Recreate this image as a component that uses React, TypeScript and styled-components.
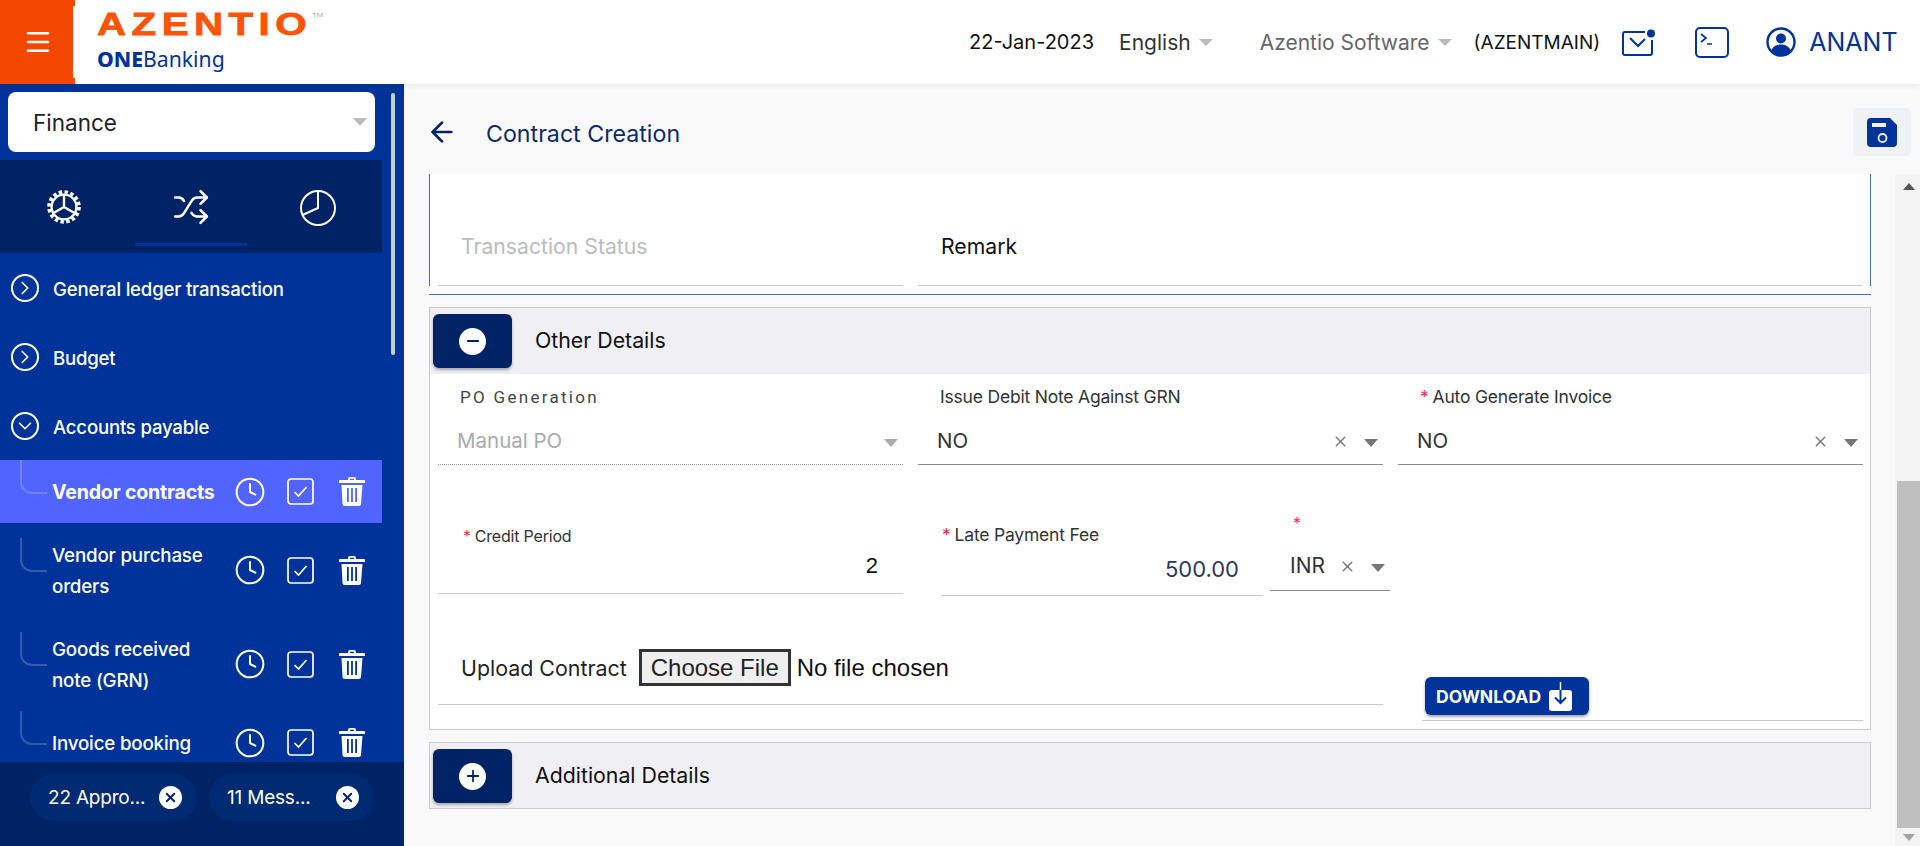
import React from "react";
import styled, { createGlobalStyle } from "styled-components";
import {
  ArrowLeft,
  ChevronDown,
  ChevronRight,
  Clock,
  Menu as MenuIcon,
  Minus,
  Plus,
  Shuffle,
  X,
} from "lucide-react";

const NAVY = "#002366";
const BLUE = "#003399";

const GlobalStyle = createGlobalStyle`
  html, body { margin: 0; padding: 0; height: 846px; overflow: hidden; }
  body { font-family: Inter, "Liberation Sans", sans-serif; background: #f9f9f9; color: #222; }
  * { box-sizing: border-box; }
`;

const GearIcon = () => (
  <svg width="36" height="36" viewBox="0 0 36 36" fill="none" stroke="#fff">
    <circle cx="18" cy="18" r="15" strokeWidth="3.6" strokeDasharray="3.4 2.5" />
    <circle cx="18" cy="18" r="12.4" strokeWidth="2.4" />
    <path d="M18 18V6M18 18L7.5 24M18 18l10.5 6" strokeWidth="2.4" />
  </svg>
);

const PieIcon = () => (
  <svg width="38" height="38" viewBox="0 0 38 38" fill="none" stroke="#fff" strokeWidth="2">
    <circle cx="19" cy="20" r="17" />
    <path d="M19 2v18L3.5 27" />
  </svg>
);

const TrashIcon = () => (
  <svg width="26" height="29" viewBox="0 0 26 29" fill="#fff">
    <path d="M9 3V2a2 2 0 0 1 2-2h4a2 2 0 0 1 2 2v1h8a1 1 0 0 1 1 1v2H0V4a1 1 0 0 1 1-1zm2-1.2V3h4V1.800z" />
    <path
      fillRule="evenodd"
      d="M2.500 8h21l-1.500 18.500a2.500 2.500 0 0 1-2.500 2.500h-13.500a2.500 2.500 0 0 1-2.500-2.500zM8 11v14h1.800V11zm4.100 0v14h1.800V11zm4.100 0v14H18V11z"
    />
  </svg>
);

const CheckBoxIcon = () => (
  <svg width="27" height="27" viewBox="0 0 27 27" fill="none" stroke="#fff" strokeWidth="1.700">
    <rect x="1" y="1" width="25" height="25" rx="3" />
    <path d="M7.500 14l4 4 8-9" />
  </svg>
);

const MailIcon = () => (
  <svg width="34" height="27" viewBox="0 0 34 27" fill="none" stroke={BLUE} strokeWidth="2">
    <path d="M23 3H3a2 2 0 0 0-2 2v19a2 2 0 0 0 2 2h25a2 2 0 0 0 2-2V11" />
    <path d="M8 9l8 8 7-7" />
    <circle cx="29" cy="4.500" r="4" fill={BLUE} stroke="none" />
  </svg>
);

const TerminalIcon = () => (
  <svg width="34" height="31" viewBox="0 0 34 31" fill="none" stroke={BLUE} strokeWidth="2">
    <rect x="1" y="1" width="32" height="29" rx="4" />
    <path d="M6 7l5 4-5 4M12 17h5" strokeWidth="1.700" />
  </svg>
);

const UserIcon = () => (
  <svg width="32" height="30" viewBox="0 0 32 30">
    <circle cx="16" cy="15" r="13.500" fill="none" stroke={BLUE} strokeWidth="2.400" />
    <circle cx="16" cy="11.500" r="5" fill={BLUE} />
    <path d="M6 24c2-5 6-6.500 10-6.500S24 19 26 24c-2.500 3-6 4.500-10 4.500S8.500 27 6 24z" fill={BLUE} />
  </svg>
);

const SaveIcon = () => (
  <svg width="31" height="31" viewBox="0 0 31 31">
    <path d="M4 1h19l7 7v18a4 4 0 0 1-4 4H4a4 4 0 0 1-4-4V5a4 4 0 0 1 4-4z" fill={BLUE} />
    <rect x="5" y="6" width="14" height="4" fill="#f0f1f5" />
    <circle cx="15.500" cy="21" r="4" fill="none" stroke="#f0f1f5" strokeWidth="1.800" />
  </svg>
);

const DownloadIcon = () => (
  <svg width="23" height="29" viewBox="0 0 23 29">
    <rect x="0" y="8" width="23" height="21" rx="3" fill="#fff" />
    <path d="M11.500 0v19" stroke="#fff" strokeWidth="1.500" />
    <path d="M11.500 8v13M6 15.500l5.500 5.500 5.500-5.500" stroke={BLUE} strokeWidth="2" fill="none" />
  </svg>
);

const Page = styled.div`
  width: 1920px;
  height: 846px;
  display: flex;
  flex-direction: column;
  overflow: hidden;
`;

const Header = styled.header`
  height: 84px;
  flex: none;
  display: flex;
  align-items: center;
  background: #fff;
  box-shadow: 0 2px 5px rgba(0, 0, 0, 0.07);
  position: relative;
  z-index: 2;
`;

const Burger = styled.div`
  width: 75px;
  height: 84px;
  flex: none;
  display: flex;
  align-items: center;
  justify-content: center;
  background: #f44700;
  color: #fff;
  position: relative;
  &::after {
    content: "";
    position: absolute;
    right: 0;
    top: 6px;
    bottom: 6px;
    width: 2px;
    background: #fff;
  }
`;

const Logo = styled.div`
  margin-left: 22px;
  width: 220px;
  height: 84px;
  padding-top: 8px;
`;

const LogoMark = styled.div`
  font-family: "Liberation Sans", sans-serif;
  font-weight: 700;
  font-size: 31px;
  line-height: 33px;
  color: #fa5507;
  letter-spacing: 4.200px;
  transform: scaleX(1.3);
  transform-origin: left center;
  white-space: nowrap;
  -webkit-text-stroke: 0.8px #fa5507;
  sup {
    font-size: 6px;
    font-weight: 400;
    letter-spacing: 0;
    color: #aaa;
    -webkit-text-stroke: 0;
    vertical-align: 18px;
    line-height: 0;
  }
`;

const LogoSub = styled.div`
  margin-top: 5px;
  font-family: "Noto Sans", sans-serif;
  font-size: 21.200px;
  line-height: 26px;
  color: ${BLUE};
  b { font-weight: 800; }
`;

const HeaderRight = styled.div`
  flex: 1;
  display: flex;
  align-items: center;
  padding-left: 652px;
  font-size: 20px;
`;

const HeaderText = styled.span<{ $ml: number; $color?: string; $size?: number }>`
  margin-left: ${(p) => p.$ml}px;
  color: ${(p) => p.$color ?? "#111"};
  font-size: ${(p) => p.$size ?? 20}px;
  white-space: nowrap;
`;

const SmallCaret = styled.i`
  display: inline-block;
  margin-left: 8px;
  border: 7px solid transparent;
  border-top: 7px solid #bbb;
  border-bottom: 0;
  vertical-align: 4px;
`;

const HeaderIcon = styled.span<{ $ml: number }>`
  margin-left: ${(p) => p.$ml}px;
  display: flex;
`;

const Body = styled.div`
  flex: 1;
  display: flex;
  min-height: 0;
`;

const Sidebar = styled.aside`
  width: 404px;
  flex: none;
  background: ${BLUE};
  display: flex;
  flex-direction: column;
  position: relative;
  overflow: hidden;
`;

const SideScrollThumb = styled.div`
  position: absolute;
  left: 391px;
  top: 9px;
  width: 4px;
  height: 262px;
  border-radius: 2px;
  background: #c8ccd4;
`;

const SideScroll = styled.div`
  flex: 1;
  min-height: 0;
  overflow: hidden;
  width: 382px;
`;

const ModuleSelect = styled.div`
  margin: 8px 0 8px 8px;
  width: 367px;
  height: 60px;
  border-radius: 8px;
  background: #fff;
  display: flex;
  align-items: center;
  justify-content: space-between;
  padding: 0 8px 0 25px;
  font-size: 22.500px;
  color: #222;
`;

const SelectCaret = styled.i`
  border: 7px solid transparent;
  border-top: 8px solid #bbb;
  border-bottom: 0;
`;

const TabRow = styled.div`
  height: 93px;
  background: ${NAVY};
  display: grid;
  grid-template-columns: repeat(3, 127px);
`;

const TabCell = styled.div<{ $active?: boolean }>`
  display: flex;
  justify-content: center;
  align-items: center;
  color: #fff;
  height: 93px;
  position: relative;
  ${(p) =>
    p.$active &&
    `&::after {
      content: "";
      position: absolute;
      left: 8px;
      right: 7px;
      bottom: 7px;
      height: 3px;
      background: ${BLUE};
    }`}
`;

const GroupRow = styled.div`
  height: 69px;
  display: flex;
  align-items: center;
  padding-left: 11px;
  color: #fff;
  font-size: 18.600px;
  font-weight: 500;
  letter-spacing: -0.2px;
  span:last-child { padding-top: 2px; }
`;

const RoundIcon = styled.span`
  width: 28px;
  height: 28px;
  border: 2px solid #fff;
  border-radius: 50%;
  display: flex;
  align-items: center;
  justify-content: center;
  margin-right: 14px;
  flex: none;
`;

const LeafRow = styled.div<{ $active?: boolean; $height: number }>`
  height: ${(p) => p.$height}px;
  position: relative;
  display: flex;
  align-items: center;
  padding-left: 52px;
  color: #fff;
  font-size: ${(p) => (p.$active ? 19.6 : 18.8)}px;
  font-weight: ${(p) => (p.$active ? 700 : 500)};
  line-height: 31px;
  letter-spacing: -0.2px;
  background: ${(p) => (p.$active ? "#5164ff" : "transparent")};
  &::before {
    content: "";
    position: absolute;
    left: 20px;
    top: calc(50% - 32px);
    width: 25px;
    height: 32px;
    border-left: 2px solid rgba(255, 255, 255, 0.2);
    border-bottom: 2px solid rgba(255, 255, 255, 0.2);
    border-bottom-left-radius: 12px;
  }
`;

const LeafText = styled.span`
  width: 166px;
  flex: none;
  padding-top: 2px;
  white-space: pre-line;
`;

const LeafIcons = styled.div`
  display: grid;
  grid-template-columns: repeat(3, 51px);
  justify-items: center;
  align-items: center;
  margin-left: 6px;
`;

const SideFooter = styled.div`
  height: 84px;
  flex: none;
  background: ${NAVY};
  position: relative;
  display: flex;
  gap: 12px;
  padding: 12px 0 0 30px;
`;

const Chip = styled.div<{ $width: number }>`
  width: ${(p) => p.$width}px;
  height: 47px;
  border-radius: 24px;
  background: #002a72;
  display: flex;
  align-items: center;
  justify-content: space-between;
  padding: 0 15px 0 18px;
  color: #fff;
  font-size: 19px;
  letter-spacing: -0.2px;
`;

const ChipClose = styled.span`
  width: 23px;
  height: 23px;
  border-radius: 50%;
  background: #fff;
  color: ${NAVY};
  display: flex;
  align-items: center;
  justify-content: center;
`;

const Main = styled.main`
  flex: 1;
  min-width: 0;
  display: flex;
  flex-direction: column;
`;

const TitleBar = styled.div`
  height: 90px;
  flex: none;
  display: flex;
  align-items: center;
  padding: 6px 9px 0 22px;
  color: ${NAVY};
`;

const Title = styled.h1`
  margin: 4px 0 0 28px;
  flex: 1;
  font-size: 23.200px;
  font-weight: 400;
  color: #0a2a66;
`;

const SaveButton = styled.div`
  width: 58px;
  height: 48px;
  background: #f0f1f5;
  border-radius: 4px;
  display: flex;
  align-items: center;
  justify-content: center;
`;

const ScrollArea = styled.div`
  flex: 1;
  min-height: 0;
  display: flex;
`;

const Content = styled.div`
  width: 1491px;
  padding: 0 24px 0 25px;
`;

const TopCard = styled.div`
  height: 121px;
  background: #fff;
  position: relative;
  border-bottom: 1px solid #3e6db5;
  &::before {
    content: "";
    position: absolute;
    inset: 0 0 8px 0;
    border-left: 1px solid #3e6db5;
    border-right: 1px solid #3e6db5;
  }
`;

const TopGrid = styled.div`
  display: grid;
  grid-template-columns: 465px 944px;
  gap: 15px;
  padding-left: 9px;
`;

const PlainField = styled.div<{ $muted?: boolean }>`
  height: 112px;
  padding: 58px 0 0 23px;
  font-size: 21.200px;
  line-height: 28px;
  color: ${(p) => (p.$muted ? "#bbb" : "#111")};
  border-bottom: 1px solid #c9c9c9;
`;

const Panel = styled.section<{ $height: number }>`
  margin-top: 12px;
  height: ${(p) => p.$height}px;
  background: #fff;
  border: 1px solid #c9c9cf;
  overflow: hidden;
`;

const PanelHead = styled.div`
  height: 66px;
  background: #efeff4;
  display: flex;
  align-items: center;
  padding: 0 0 2px 3px;
  font-size: 21.300px;
  color: #111;
`;

const Toggle = styled.div`
  width: 79px;
  height: 54px;
  background: ${NAVY};
  border-radius: 6px;
  margin: 2px 23px 0 0;
  box-shadow: 0 2px 3px rgba(0, 0, 0, 0.3);
  display: flex;
  align-items: center;
  justify-content: center;
`;

const ToggleDot = styled.span`
  width: 27px;
  height: 27px;
  background: #fff;
  border-radius: 50%;
  color: ${NAVY};
  display: flex;
  align-items: center;
  justify-content: center;
`;

const FormRow = styled.div<{ $mt: number }>`
  display: grid;
  grid-template-columns: repeat(3, 465px);
  column-gap: 15px;
  align-items: start;
  margin-top: ${(p) => p.$mt}px;
  padding-left: 8px;
`;

const Field = styled.div<{ $height: number; $line?: string; $ml?: number; $width?: number; $span?: number }>`
  height: ${(p) => p.$height}px;
  margin-left: ${(p) => p.$ml ?? 0}px;
  width: ${(p) => (p.$width ? `${p.$width}px` : "auto")};
  grid-column: span ${(p) => p.$span ?? 1};
  flex: none;
  border-bottom: 1px ${(p) => p.$line ?? "solid #c9c9c9"};
  display: flex;
  flex-direction: column;
`;

const Label = styled.label<{ $top: number; $left: number; $size?: number }>`
  margin-top: ${(p) => p.$top}px;
  margin-left: ${(p) => p.$left}px;
  font-size: ${(p) => p.$size ?? 17.5}px;
  line-height: 20px;
  letter-spacing: -0.2px;
  color: #333;
  white-space: nowrap;
`;

const SpacedLabel = styled(Label)`
  font-family: Roboto, sans-serif;
  font-size: 17px;
  letter-spacing: 2.3px;
  color: #444;
`;

const Star = styled.span`
  color: #f0304f;
  margin-right: 4px;
`;

const SelectValue = styled.div<{ $top: number; $left: number; $color?: string; $size?: number }>`
  margin-top: ${(p) => p.$top}px;
  padding-left: ${(p) => p.$left}px;
  padding-right: 5px;
  display: flex;
  align-items: center;
  justify-content: space-between;
  font-size: ${(p) => p.$size ?? 20.5}px;
  line-height: 26px;
  color: ${(p) => p.$color ?? "#333"};
`;

const SelectTools = styled.span`
  display: flex;
  align-items: center;
  gap: 15px;
  color: #777;
`;

const Caret = styled.i<{ $light?: boolean }>`
  border: 7px solid transparent;
  border-top: 8px solid ${(p) => (p.$light ? "#aaa" : "#757575")};
  border-bottom: 0;
  margin-top: 3px;
`;

const NumberValue = styled.div<{ $top: number; $right: number; $color?: string; $arial?: boolean }>`
  margin-top: ${(p) => p.$top}px;
  padding-right: ${(p) => p.$right}px;
  text-align: right;
  font-size: 22px;
  line-height: 28px;
  color: ${(p) => p.$color ?? "#111"};
  font-family: ${(p) => (p.$arial ? '"Liberation Sans", sans-serif' : "Inter, sans-serif")};
`;

const FeeGroup = styled.div`
  display: flex;
  gap: 7px;
  align-items: flex-start;
`;

const UploadLine = styled.div`
  margin-top: 39px;
  padding-left: 23px;
  display: flex;
  align-items: center;
  font-size: 21.400px;
  height: 37px;
  white-space: nowrap;
`;

const ChooseButton = styled.span`
  margin-left: 12px;
  width: 152px;
  height: 37px;
  border: 3px solid #333;
  background: #efefef;
  display: flex;
  align-items: center;
  justify-content: center;
  font-family: "Liberation Sans", sans-serif;
  font-size: 24px;
  color: #222;
`;

const FileName = styled.span`
  margin-left: 6px;
  font-family: "Liberation Sans", sans-serif;
  font-size: 24px;
  color: #111;
`;

const DownloadButton = styled.div`
  margin: 67px 0 0 3px;
  width: 164px;
  height: 38px;
  background: ${BLUE};
  border-radius: 6px;
  box-shadow: 0 2px 3px rgba(0, 0, 0, 0.35);
  display: flex;
  align-items: center;
  gap: 8px;
  padding-left: 11px;
  color: #fff;
  font-size: 17.500px;
  font-weight: 700;
`;

const Scrollbar = styled.div`
  width: 25px;
  flex: none;
  background: #f3f3f3;
  display: flex;
  flex-direction: column;
  align-items: center;
  padding-left: 2px;
`;

const ScrollArrow = styled.i<{ $down?: boolean }>`
  margin: ${(p) => (p.$down ? "6px 0 5px" : "9px 0")};
  border: 6px solid transparent;
  ${(p) => (p.$down ? "border-top: 7px solid #a3a3a3; border-bottom: 0;" : "border-bottom: 7px solid #555; border-top: 0;")}
`;

const ScrollThumb = styled.div`
  width: 100%;
  height: 347px;
  margin-top: auto;
  background: #bfbfbf;
`;

const leafRows = [
  { text: "Vendor contracts", height: 63, active: true },
  { text: "Vendor purchase\norders", height: 94 },
  { text: "Goods received\nnote (GRN)", height: 94 },
  { text: "Invoice booking", height: 63 },
];

export default function App() {
  return (
    <Page>
      <GlobalStyle />
      <Header>
        <Burger>
          <MenuIcon size={30} strokeWidth={2} />
        </Burger>
        <Logo>
          <LogoMark>
            AZENTIO<sup>TM</sup>
          </LogoMark>
          <LogoSub>
            <b>ONE</b>Banking
          </LogoSub>
        </Logo>
        <HeaderRight>
          <HeaderText $ml={0}>22-Jan-2023</HeaderText>
          <HeaderText $ml={25} $color="#333" $size={21}>
            English
            <SmallCaret />
          </HeaderText>
          <HeaderText $ml={47} $color="#666" $size={21}>
            Azentio Software
            <SmallCaret />
          </HeaderText>
          <HeaderText $ml={22} $size={19}>
            (AZENTMAIN)
          </HeaderText>
          <HeaderIcon $ml={22}>
            <MailIcon />
          </HeaderIcon>
          <HeaderIcon $ml={39}>
            <TerminalIcon />
          </HeaderIcon>
          <HeaderIcon $ml={36}>
            <UserIcon />
          </HeaderIcon>
          <HeaderText $ml={12} $color={BLUE} $size={25}>
            ANANT
          </HeaderText>
        </HeaderRight>
      </Header>

      <Body>
        <Sidebar>
          <SideScrollThumb />
          <SideScroll>
            <ModuleSelect>
              Finance
              <SelectCaret />
            </ModuleSelect>
            <TabRow>
              <TabCell>
                <GearIcon />
              </TabCell>
              <TabCell $active>
                <Shuffle size={38} strokeWidth={1.6} />
              </TabCell>
              <TabCell>
                <PieIcon />
              </TabCell>
            </TabRow>
            <GroupRow>
              <RoundIcon>
                <ChevronRight size={22} strokeWidth={1.8} />
              </RoundIcon>
              <span>General ledger transaction</span>
            </GroupRow>
            <GroupRow>
              <RoundIcon>
                <ChevronRight size={22} strokeWidth={1.8} />
              </RoundIcon>
              <span>Budget</span>
            </GroupRow>
            <GroupRow>
              <RoundIcon>
                <ChevronDown size={22} strokeWidth={1.8} />
              </RoundIcon>
              <span>Accounts payable</span>
            </GroupRow>
            {leafRows.map((row) => (
              <LeafRow key={row.text} $active={row.active} $height={row.height}>
                <LeafText>{row.text}</LeafText>
                <LeafIcons>
                  <Clock size={32} strokeWidth={1.5} />
                  <CheckBoxIcon />
                  <TrashIcon />
                </LeafIcons>
              </LeafRow>
            ))}
          </SideScroll>
          <SideFooter>
            <Chip $width={167}>
              22 Appro...
              <ChipClose>
                <X size={15} strokeWidth={3} />
              </ChipClose>
            </Chip>
            <Chip $width={165}>
              11 Mess...
              <ChipClose>
                <X size={15} strokeWidth={3} />
              </ChipClose>
            </Chip>
          </SideFooter>
        </Sidebar>

        <Main>
          <TitleBar>
            <ArrowLeft size={32} strokeWidth={2} />
            <Title>Contract Creation</Title>
            <SaveButton>
              <SaveIcon />
            </SaveButton>
          </TitleBar>
          <ScrollArea>
            <Content>
              <TopCard>
                <TopGrid>
                  <PlainField $muted>Transaction Status</PlainField>
                  <PlainField>Remark</PlainField>
                </TopGrid>
              </TopCard>
              <Panel $height={423}>
                <PanelHead>
                  <Toggle>
                    <ToggleDot>
                      <Minus size={18} strokeWidth={2.4} />
                    </ToggleDot>
                  </Toggle>
                  Other Details
                </PanelHead>
                <FormRow $mt={0}>
                  <Field $height={91} $line="dotted #999">
                    <SpacedLabel $top={13} $left={22}>
                      PO Generation
                    </SpacedLabel>
                    <SelectValue $top={21} $left={19} $color="#aaa">
                      Manual PO
                      <Caret $light />
                    </SelectValue>
                  </Field>
                  <Field $height={91} $line="solid #8a8a8a">
                    <Label $top={13} $left={22}>
                      Issue Debit Note Against GRN
                    </Label>
                    <SelectValue $top={21} $left={19}>
                      NO
                      <SelectTools>
                        <X size={17} />
                        <Caret />
                      </SelectTools>
                    </SelectValue>
                  </Field>
                  <Field $height={91} $line="solid #8a8a8a">
                    <Label $top={13} $left={22}>
                      <Star>*</Star>Auto Generate Invoice
                    </Label>
                    <SelectValue $top={21} $left={19}>
                      NO
                      <SelectTools>
                        <X size={17} />
                        <Caret />
                      </SelectTools>
                    </SelectValue>
                  </Field>
                </FormRow>
                <FormRow $mt={40}>
                  <Field $height={89}>
                    <Label $top={21} $left={25} $size={16}>
                      <Star>*</Star>Credit Period
                    </Label>
                    <NumberValue $top={6} $right={25} $arial>
                      2
                    </NumberValue>
                  </Field>
                  <FeeGroup>
                    <Field $height={91} $ml={24} $width={321}>
                      <Label $top={20} $left={0}>
                        <Star>*</Star>Late Payment Fee
                      </Label>
                      <NumberValue $top={10} $right={24} $color="#2b3a55">
                        500.00
                      </NumberValue>
                    </Field>
                    <Field $height={86} $width={120} $line="solid #8a8a8a">
                      <Label $top={8} $left={23} $size={16}>
                        <Star>*</Star>
                      </Label>
                      <SelectValue $top={20} $left={20} $size={21}>
                        INR
                        <SelectTools>
                          <X size={17} />
                          <Caret />
                        </SelectTools>
                      </SelectValue>
                    </Field>
                  </FeeGroup>
                </FormRow>
                <FormRow $mt={14}>
                  <Field $height={95} $span={2}>
                    <UploadLine>
                      Upload Contract
                      <ChooseButton>Choose File</ChooseButton>
                      <FileName>No file chosen</FileName>
                    </UploadLine>
                  </Field>
                  <Field $height={111} $ml={24}>
                    <DownloadButton>
                      DOWNLOAD
                      <DownloadIcon />
                    </DownloadButton>
                  </Field>
                </FormRow>
              </Panel>
              <Panel $height={67}>
                <PanelHead>
                  <Toggle>
                    <ToggleDot>
                      <Plus size={18} strokeWidth={2.4} />
                    </ToggleDot>
                  </Toggle>
                  Additional Details
                </PanelHead>
              </Panel>
            </Content>
            <Scrollbar>
              <ScrollArrow />
              <ScrollThumb />
              <ScrollArrow $down />
            </Scrollbar>
          </ScrollArea>
        </Main>
      </Body>
    </Page>
  );
}
